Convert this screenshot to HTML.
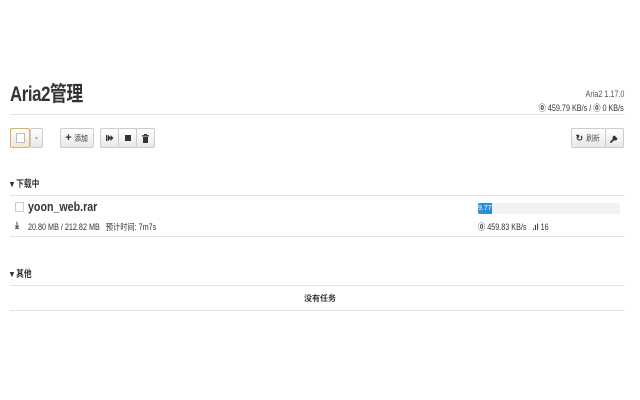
<!DOCTYPE html>
<html><head><meta charset="utf-8"><style>
*{box-sizing:border-box;margin:0;padding:0}
body{width:640px;height:400px;background:#fff;font-family:"Liberation Sans","Noto Sans CJK SC",sans-serif;color:#333;position:relative;overflow:hidden}
.a{position:absolute;white-space:nowrap}
.n{transform:scaleX(0.82);transform-origin:0 0}
.r{transform:scaleX(0.82);transform-origin:100% 0}
.line{position:absolute;left:10px;width:615px;height:1px;background:#e3e3e3}
.btn{position:absolute;border:1px solid #ccc;border-radius:2px;background:linear-gradient(#fff,#e8e8e8);height:20px;font-size:8px;display:flex;align-items:center;justify-content:center;color:#333}
.s{font-size:8.8px;color:#333}
</style></head><body>
<div class="a n" style="left:10px;top:78px;font-size:21px;font-weight:bold;letter-spacing:-0.5px;transform:scaleX(0.8)">Aria2管理</div>
<div class="a s r" style="right:16px;top:89px;color:#555">Aria2 1.17.0</div>
<div class="a s r" style="right:16px;top:101px"><b>⓪</b> 459.79 KB/s / <b>⓪</b> 0 KB/s</div>
<div class="line" style="top:114px"></div>
<div class="btn" style="left:10px;top:128px;width:20px;border-color:#e8b04c"><span style="width:9px;height:10px;border:1px solid #bbb;display:block;background:#fff"></span></div>
<div class="btn" style="left:30px;top:128px;width:13px;color:#aaa;font-size:6px">▾</div>
<div class="btn" style="left:60px;top:128px;width:34px"><b style="font-size:11px;margin-right:1px">+</b><span style="transform:scaleX(.85);display:inline-block">添加</span></div>
<div class="btn" style="left:100px;top:128px;width:19px"><svg width="8" height="8" viewBox="0 0 8 8"><rect x="0" y="1" width="1.5" height="6" fill="#333"/><path d="M2 1L5 4L2 7ZM4.5 1L7.5 4L4.5 7Z" fill="#333"/></svg></div>
<div class="btn" style="left:118px;top:128px;width:19px"><span style="width:6px;height:6px;background:#333;display:block"></span></div>
<div class="btn" style="left:136px;top:128px;width:19px"><svg width="7" height="9" viewBox="0 0 7 9"><rect x="2" y="0" width="3" height="1.2" fill="#333"/><rect x="0" y="1.2" width="7" height="1.3" fill="#333"/><rect x="1" y="3" width="5" height="6" fill="#333"/></svg></div>
<div class="btn" style="left:571px;top:128px;width:35px"><b style="font-size:9px">↻</b>&nbsp;<span style="transform:scaleX(.85);display:inline-block;color:#555">刷新</span></div>
<div class="btn" style="left:605px;top:128px;width:19px"><svg width="9" height="9" viewBox="0 0 9 9"><path d="M1 8L5 4" stroke="#333" stroke-width="1.8" stroke-linecap="round"/><path d="M4.5 1.5A2.5 2.5 0 1 0 7.5 4.5L6.5 3.5L5.5 2.5Z" fill="#333"/></svg></div>
<div class="a n" style="left:10px;top:176px;font-size:9.5px;font-weight:bold">▾ 下载中</div>
<div class="line" style="top:195px"></div>
<div class="a" style="left:15px;top:202px;width:9px;height:10px;border:1px solid #ccc"></div>
<div class="a n" style="left:28px;top:199px;font-size:13px;font-weight:bold">yoon_web.rar</div>
<div class="a" style="left:15px;top:220px;font-size:9px;font-weight:bold">⤓</div>
<div class="a s n" style="left:28px;top:220px">20.80 MB / 212.82 MB &nbsp;&nbsp;预计时间: 7m7s</div>
<div class="a" style="left:478px;top:203px;width:142px;height:11px;background:#f2f2f2;border-radius:2px"></div>
<div class="a" style="left:478px;top:203px;width:14px;height:11px;background:#2a8fd6;color:#fff;font-size:7px;line-height:11px;border-radius:2px 0 0 2px;overflow:hidden">9.77</div>
<div class="a s n" style="left:478px;top:220px"><b>⓪</b> 459.83 KB/s &nbsp;&nbsp;<b>.ıl</b> 16</div>
<div class="line" style="top:236px"></div>
<div class="a n" style="left:10px;top:266px;font-size:9.5px;font-weight:bold">▾ 其他</div>
<div class="line" style="top:285px"></div>
<div class="a" style="left:0;width:640px;text-align:center;top:293px;font-size:8px;font-weight:bold">没有任务</div>
<div class="line" style="top:310px"></div>
</body></html>
